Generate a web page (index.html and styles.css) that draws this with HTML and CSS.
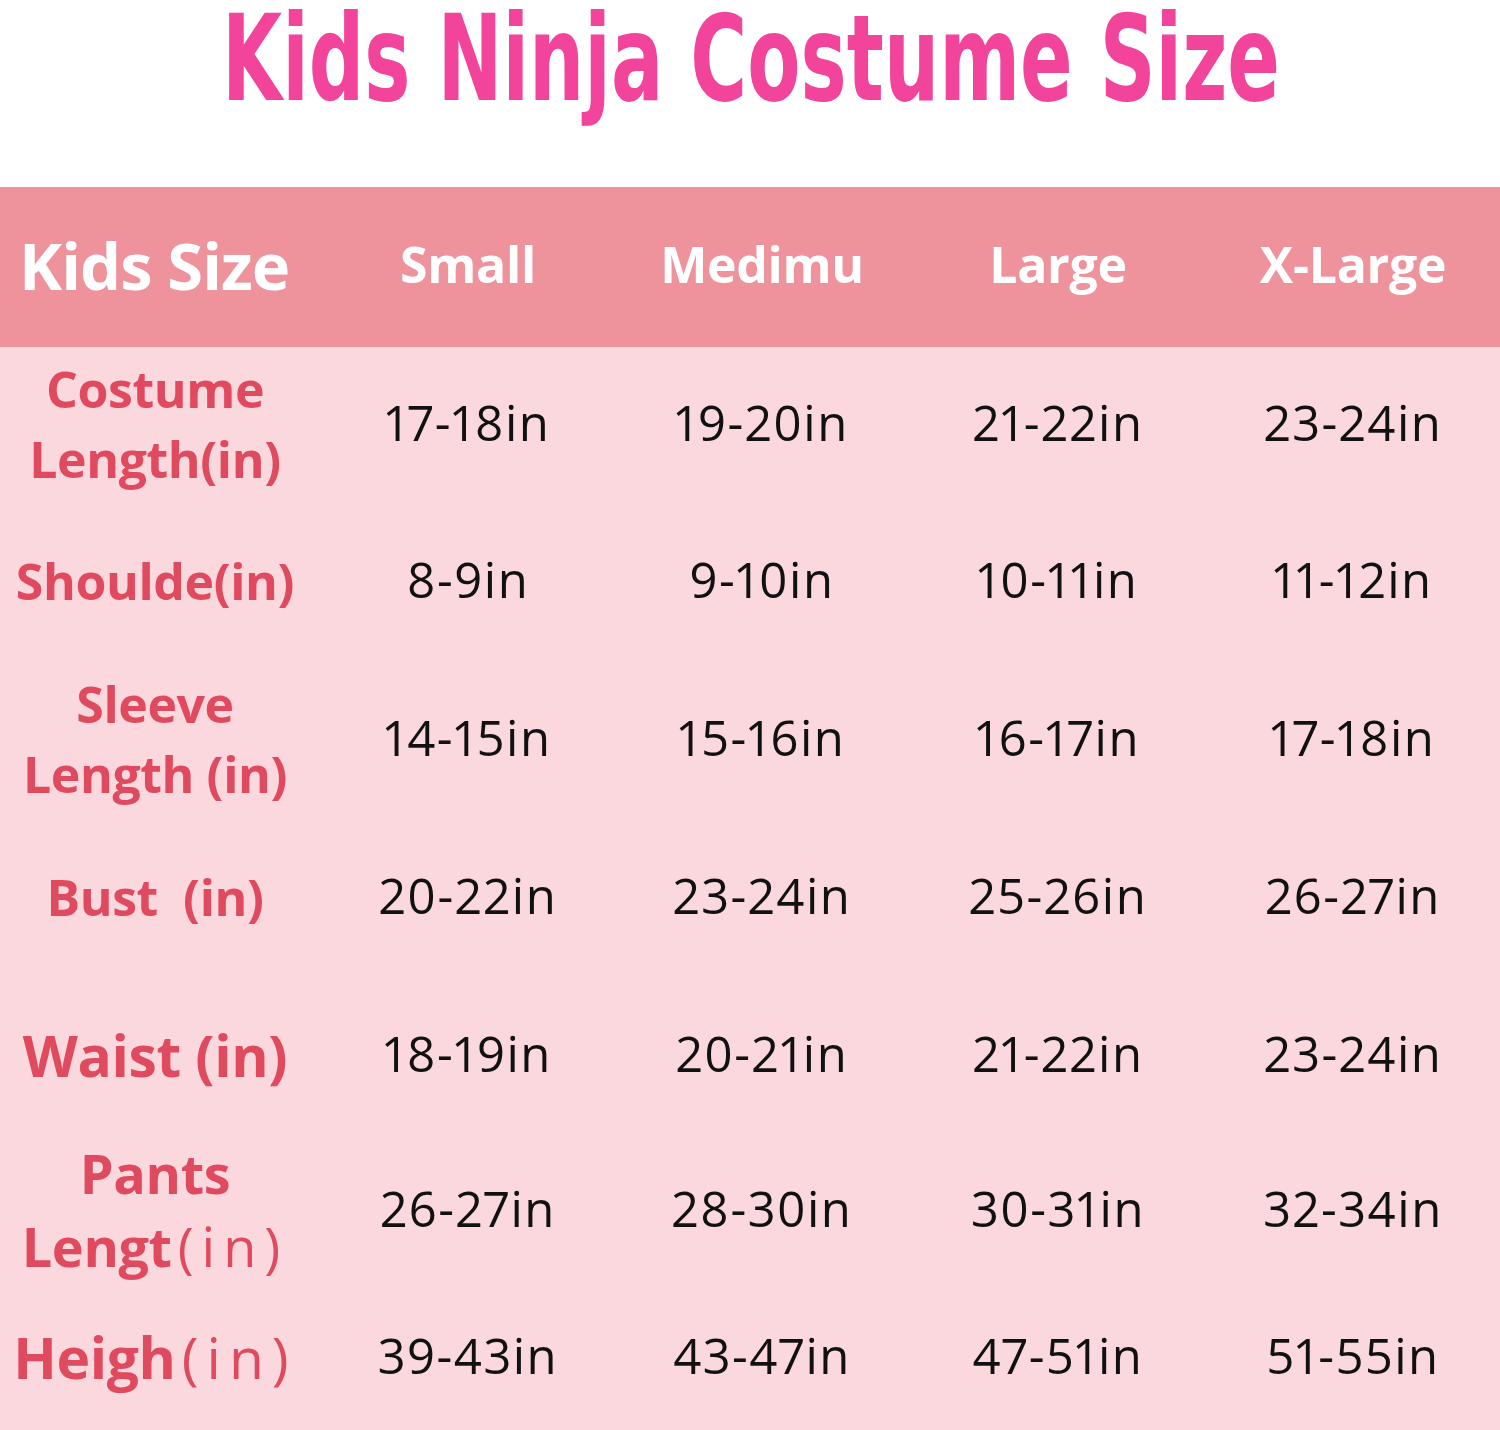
FILE: index.html
```html
<!DOCTYPE html>
<html lang="en">
<head>
<meta charset="utf-8">
<title>Kids Ninja Costume Size</title>
<link rel="stylesheet" href="styles.css">
</head>
<body>
<div class="page">
  <header class="title-bar">
    <svg class="title" width="1500" height="187" viewBox="0 0 1500 187" role="img" aria-label="Kids Ninja Costume Size">
      <text class="title-text" x="222" y="100" textLength="1058" lengthAdjust="spacingAndGlyphs">Kids Ninja Costume Size</text>
    </svg>
  </header>
  <div class="chart">
    <div class="row head">
      <div class="cell label-head">Kids Size</div>
      <div class="cell col-head">Small</div>
      <div class="cell col-head">Medimu</div>
      <div class="cell col-head">Large</div>
      <div class="cell col-head">X-Large</div>
    </div>
    <div class="row r1">
      <div class="cell label">Costume<br>Length(in)</div>
      <div class="cell val">17-18in</div>
      <div class="cell val">19-20in</div>
      <div class="cell val">21-22in</div>
      <div class="cell val">23-24in</div>
    </div>
    <div class="row r2">
      <div class="cell label">Shoulde(in)</div>
      <div class="cell val">8-9in</div>
      <div class="cell val">9-10in</div>
      <div class="cell val">10-11in</div>
      <div class="cell val">11-12in</div>
    </div>
    <div class="row r3">
      <div class="cell label">Sleeve<br>Length (in)</div>
      <div class="cell val">14-15in</div>
      <div class="cell val">15-16in</div>
      <div class="cell val">16-17in</div>
      <div class="cell val">17-18in</div>
    </div>
    <div class="row r4">
      <div class="cell label pre">Bust  (in)</div>
      <div class="cell val">20-22in</div>
      <div class="cell val">23-24in</div>
      <div class="cell val">25-26in</div>
      <div class="cell val">26-27in</div>
    </div>
    <div class="row r5">
      <div class="cell label big">Waist (in)</div>
      <div class="cell val">18-19in</div>
      <div class="cell val">20-21in</div>
      <div class="cell val">21-22in</div>
      <div class="cell val">23-24in</div>
    </div>
    <div class="row r6">
      <div class="cell label mid">Pants<br>Lengt<span class="thin">(in)</span></div>
      <div class="cell val">26-27in</div>
      <div class="cell val">28-30in</div>
      <div class="cell val">30-31in</div>
      <div class="cell val">32-34in</div>
    </div>
    <div class="row r7">
      <div class="cell label big">Heigh<span class="thin">(in)</span></div>
      <div class="cell val">39-43in</div>
      <div class="cell val">43-47in</div>
      <div class="cell val">47-51in</div>
      <div class="cell val">51-55in</div>
    </div>
  </div>
</div>
</body>
</html>
```

FILE: styles.css
```css
html, body {
  margin: 0;
  padding: 0;
  background: #ffffff;
}

.page {
  width: 1500px;
  height: 1430px;
  overflow: hidden;
  font-family: "Open Sans", "DejaVu Sans", sans-serif;
}

.title-bar {
  height: 187px;
  background: #ffffff;
}

.title {
  display: block;
  overflow: visible;
}

.title-text {
  font-family: "DejaVu Sans", "Verdana", sans-serif;
  font-weight: bold;
  font-size: 120px;
  fill: #f2449b;
}

.chart {
  background: #fad8dd;
}

.row {
  display: grid;
  grid-template-columns: 322px 292px 296px 296px 294px;
  align-items: center;
}

.row.head { height: 160px; background: #ee929c; }
.row.r1 { height: 158px; }
.row.r2 { height: 156px; }
.row.r3 { height: 159px; }
.row.r4 { height: 158px; }
.row.r5 { height: 158px; }
.row.r6 { height: 152px; }
.row.r7 { height: 142px; }

.cell {
  text-align: center;
  white-space: nowrap;
}

.label-head {
  font-weight: 700;
  font-size: 65px;
  color: #ffffff;
  letter-spacing: -1px;
  text-align: left;
  padding-left: 19px;
  padding-bottom: 4px;
}

.col-head {
  font-weight: 700;
  font-size: 50px;
  color: #ffffff;
  letter-spacing: -0.3px;
  padding-bottom: 6px;
}

.label {
  font-weight: 700;
  font-size: 50px;
  line-height: 70px;
  color: #e04a5f;
  letter-spacing: -0.4px;
  padding-right: 12px;
  padding-bottom: 4px;
}

.label.pre { white-space: pre; }

.label.big {
  font-size: 57px;
}

.label.mid {
  font-size: 54px;
  line-height: 73px;
}

.thin {
  font-weight: 400;
  letter-spacing: 8px;
  padding-left: 6px;
}

.val {
  font-size: 49px;
  color: #111111;
  letter-spacing: 1.5px;
  font-variant-numeric: proportional-nums;
  padding-bottom: 8px;
}
```
